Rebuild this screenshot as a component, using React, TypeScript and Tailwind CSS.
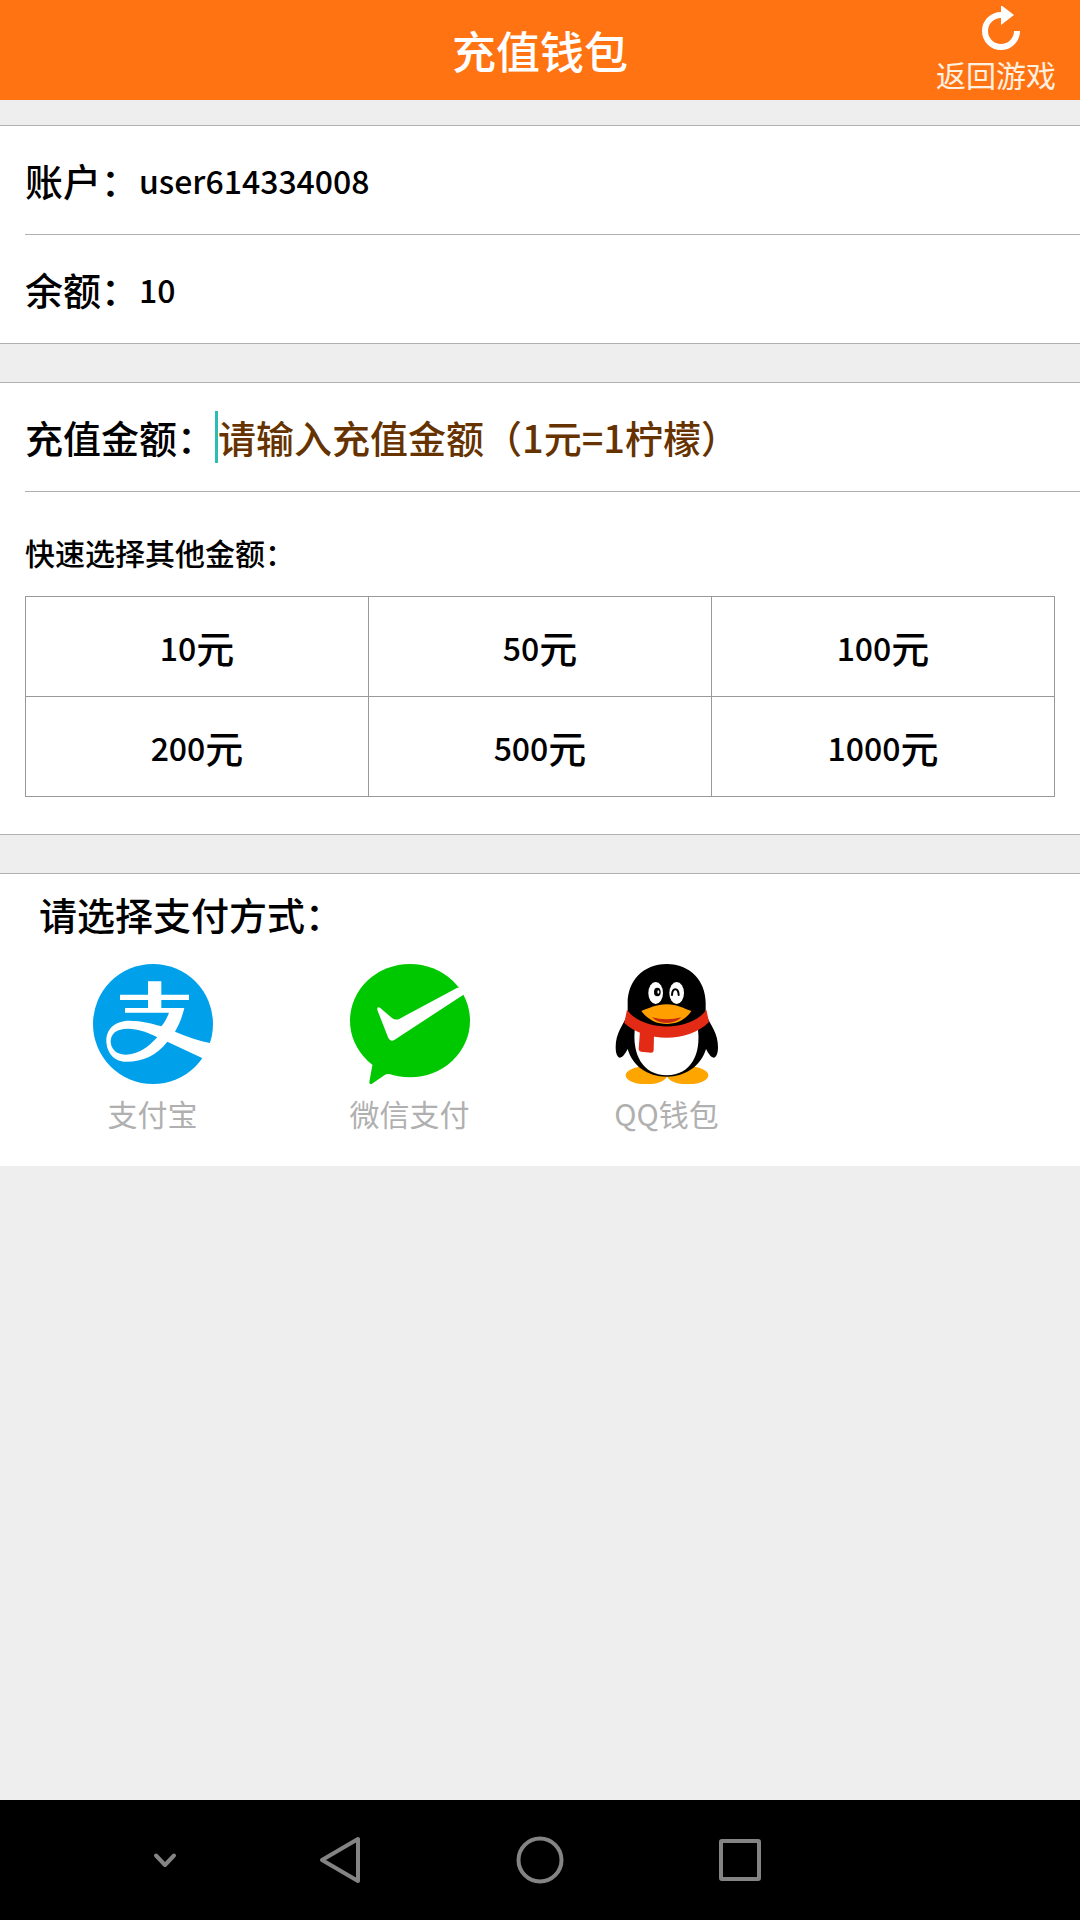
import { useState } from "react";
import type { ReactNode } from "react";

const AMOUNTS = [10, 50, 100, 200, 500, 1000];

const BackToGameIcon = () => (
  <svg viewBox="0 0 48 48" className="h-12 w-12" aria-hidden="true">
    <path d="M45 25a16 16 0 1 1-16-16" fill="none" stroke="#fff" strokeWidth="6" />
    <path d="M29 -1 42 9 29 19Z" fill="#fff" />
  </svg>
);

const AlipayIcon = () => (
  <svg viewBox="0 0 360 360" className="h-[120px] w-[120px]" aria-hidden="true">
    <circle cx="180" cy="180" r="180" fill="#00a0ea" />
    <path d="M165 52h40v40h83v16h-83v24h-40v-24H81V92h84Z" fill="#fff" />
    <path
      d="M96 132H274C268 158 258 182 246 203C280 218 318 230 354 238L332 284L223 233C190 275 150 293 100 293C60 293 40 262 40 230C40 190 72 170 110 170C148 170 180 180 205 187C215 175 222 162 228 146H96Z"
      fill="#fff"
    />
    <path
      d="M193 220C165 205 135 194 105 194C70 194 53 210 53 232C53 255 70 272 97 272C135 272 165 250 193 220Z"
      fill="#00a0ea"
    />
  </svg>
);

const WechatPayIcon = () => (
  <svg viewBox="0 0 360 360" className="h-[120px] w-[120px]" aria-hidden="true">
    <ellipse cx="180" cy="170" rx="180" ry="170" fill="#00c800" />
    <path d="M67 304L58 354Q58 363 66 359L104 333Q110 329 120 331L140 300Z" fill="#00c800" />
    <path
      d="M90 131L127 163Q137 170 149 164L322 71L345 73L344 90L134 227Q122 235 115 222L82 138Q80 126 90 131Z"
      fill="#fff"
    />
  </svg>
);

const QQIcon = () => (
  <svg viewBox="-26 0 360 360" className="h-[120px] w-[120px]" aria-hidden="true">
    <ellipse cx="92" cy="334" rx="62" ry="27" fill="#ffa500" />
    <ellipse cx="216" cy="334" rx="62" ry="27" fill="#ffa500" />
    <path
      d="M153 0C82 0 36 52 36 116V150C24 182 0 205 0 250C0 270 6 281 13 281C22 280 29 268 36 255C50 305 95 338 153 338C211 338 256 305 271 255C278 268 285 280 294 281C301 281 307 270 307 250C307 205 283 182 270 150V116C270 52 224 0 153 0Z"
      fill="#000"
    />
    <path d="M58 190C48 270 80 334 153 334C226 334 258 270 246 190Z" fill="#fff" />
    <ellipse cx="120" cy="87" rx="22" ry="33" fill="#fff" />
    <ellipse cx="183" cy="87" rx="22" ry="33" fill="#fff" />
    <ellipse cx="125" cy="84" rx="10" ry="13" fill="#000" />
    <ellipse cx="128" cy="84" rx="3" ry="5" fill="#fff" />
    <path d="M169 93C170 70 188 70 189 93" fill="none" stroke="#000" strokeWidth="6" strokeLinecap="round" />
    <path d="M34 137C80 204 226 204 272 137L280 174C220 236 90 236 26 177Z" fill="#e32a14" />
    <path d="M73 200L69 256Q69 262 76 263L106 266Q114 266 114 258L115 214Z" fill="#e32a14" />
    <path d="M153 121C185 121 205 134 227 141C216 160 190 180 153 180C116 180 90 160 77 141C100 133 121 121 153 121Z" fill="#ff9f00" />
    <path d="M109 160Q153 172 197 160Q180 177 153 177Q126 177 109 160Z" fill="#c82a10" />
  </svg>
);

const PAY_METHODS = [
  { id: "alipay", label: "支付宝", icon: <AlipayIcon /> },
  { id: "wechat", label: "微信支付", icon: <WechatPayIcon /> },
  { id: "qq", label: "QQ钱包", icon: <QQIcon /> },
];

const InfoRow = ({ label, value }: { label: string; value: string }) => (
  <div className="flex items-center py-7">
    <dt>{label}</dt>
    <dd className="text-[32px] leading-[52px]">{value}</dd>
  </div>
);

const NavButton = ({ label, width, children }: { label: string; width: string; children: ReactNode }) => (
  <button type="button" aria-label={label} className={`flex h-full items-center justify-center ${width}`}>
    <svg
      viewBox="0 0 50 50"
      className="h-[50px] w-[50px]"
      fill="none"
      stroke="#848484"
      strokeWidth="4"
      strokeLinejoin="round"
      strokeLinecap="round"
    >
      {children}
    </svg>
  </button>
);

const App = () => {
  const [amount, setAmount] = useState("");

  return (
    <div className="flex min-h-screen flex-col bg-[#eee] font-['Noto_Sans_CJK_SC',sans-serif] text-[38px] leading-[52px] font-medium text-black">
      <header className="grid h-[100px] grid-cols-[1fr_auto_1fr] items-center bg-[#ff7312] text-white">
        <h1 className="col-start-2 text-[44px]">充值钱包</h1>
        <a
          href="#game"
          className="mr-6 flex flex-col items-center justify-self-end text-[30px] leading-[40px] font-normal text-[#fff0e0]"
        >
          <BackToGameIcon />
          返回游戏
        </a>
      </header>

      <main>
        <dl className="mt-[25px] divide-y divide-[#b0b0b0] border-y border-[#b0b0b0] bg-white pl-[25px]">
          <InfoRow label="账户：" value="user614334008" />
          <InfoRow label="余额：" value="10" />
        </dl>

        <section className="mt-[38px] border-y border-[#b0b0b0] bg-white pb-[37px] pl-[25px]">
          <div className="flex h-[109px] items-center border-b border-[#b0b0b0]">
            <label htmlFor="amount" className="shrink-0">
              充值金额：
            </label>
            {!amount && <span className="h-[52px] w-[3px] shrink-0 bg-[#2bbcb4]" />}
            <input
              id="amount"
              inputMode="numeric"
              value={amount}
              onChange={(e) => setAmount(e.target.value)}
              placeholder="请输入充值金额（1元=1柠檬）"
              className="h-[52px] min-w-0 flex-1 caret-[#2bbcb4] outline-none placeholder:text-[#663300]"
            />
          </div>
          <h2 className="flex h-[104px] items-center pt-4 text-[30px]">快速选择其他金额：</h2>
          <div className="mr-[25px] grid grid-cols-3 border-t border-l border-[#999]">
            {AMOUNTS.map((n) => (
              <button
                key={n}
                type="button"
                onClick={() => setAmount(String(n))}
                className="flex h-[100px] items-center justify-center border-r border-b border-[#999]"
              >
                <span className="text-[32px] leading-[52px]">{n}</span>元
              </button>
            ))}
          </div>
        </section>

        <section className="mt-[38px] border-t border-[#b0b0b0] bg-white pb-[38px]">
          <h2 className="flex h-20 items-center pl-[39px]">请选择支付方式：</h2>
          <div className="grid grid-cols-4 pt-[10px] pr-7 pl-6">
            {PAY_METHODS.map((m) => (
              <button
                key={m.id}
                type="button"
                className="flex flex-col items-center gap-[14px] text-[30px] leading-[30px] font-normal text-[#b0b0b0]"
              >
                {m.icon}
                {m.label}
              </button>
            ))}
          </div>
        </section>
      </main>

      {/* Android system keys */}
      <nav className="mt-auto flex h-[120px] justify-center bg-black pr-[150px]">
        <NavButton label="收起" width="w-[150px]">
          <path d="M16 20.500 25 30 34 20.500" />
        </NavButton>
        <NavButton label="返回" width="w-[200px]">
          <path d="M43 4V46L7 25Z" />
        </NavButton>
        <NavButton label="主页" width="w-[200px]">
          <circle cx="25" cy="25" r="21.5" />
        </NavButton>
        <NavButton label="最近任务" width="w-[200px]">
          <rect x="6" y="6" width="38" height="38" rx="1" />
        </NavButton>
      </nav>
    </div>
  );
};

export default App;
